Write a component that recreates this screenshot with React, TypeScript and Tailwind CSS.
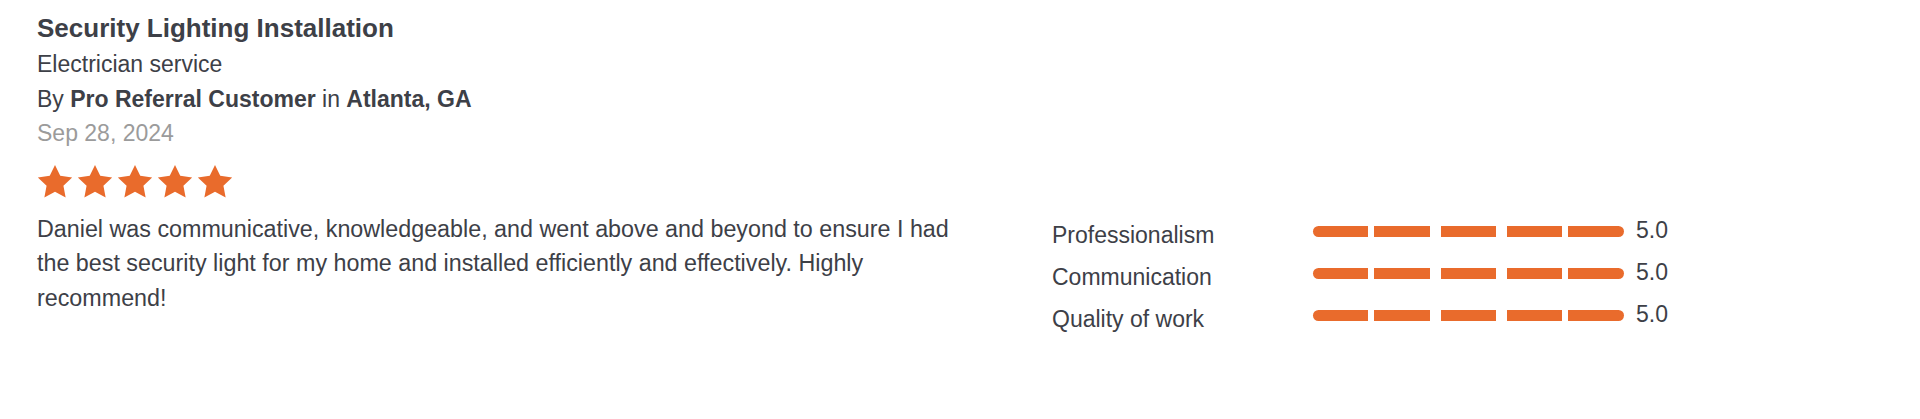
import type { ReactNode } from "react";

const ratings = [
  { label: "Professionalism", value: 5 },
  { label: "Communication", value: 5 },
  { label: "Quality of work", value: 5 },
];

function Star() {
  return (
    <svg viewBox="0 0 24 23" className="h-[34px] w-[36px]" aria-hidden="true">
      <path
        d="M12 0.6l3.55 7.4 8.05 1.05-5.9 5.6 1.5 8-7.2-3.95-7.2 3.95 1.5-8L0.4 9.05 8.45 8z"
        fill="#e96b2c"
      />
    </svg>
  );
}

function SegmentBar({ value }: { value: number }) {
  // five segments, rounded only at the outer ends
  const filled = (i: number) => (i < value ? "bg-[#e96b2c]" : "bg-[#e5e5e5]");
  return (
    <div className="flex h-[11px] w-[311px] items-stretch">
      <div className={`w-[55px] rounded-l-full ${filled(0)}`} />
      <div className={`ml-[6px] w-[56px] ${filled(1)}`} />
      <div className={`ml-[11px] w-[56px] ${filled(2)}`} />
      <div className={`ml-[11px] w-[55px] ${filled(3)}`} />
      <div className={`ml-[6px] w-[56px] rounded-r-full ${filled(4)}`} />
    </div>
  );
}

function B({ children }: { children: ReactNode }) {
  return <span className="font-bold">{children}</span>;
}

export default function App() {
  return (
    <div className="h-[419px] w-full bg-white pl-[37px] pt-[9px] font-['Liberation_Sans',Arial,sans-serif] text-[23px] leading-[34.5px] text-[#3d4047]">
      <h2 className="text-[26px] font-bold leading-[38px]">Security Lighting Installation</h2>
      <div>Electrician service</div>
      <div>
        By <B>Pro Referral Customer</B> in <B>Atlanta, GA</B>
      </div>
      <div className="text-[#9b9b9b]">Sep 28, 2024</div>
      <div className="mt-[13px] flex gap-[4px]">
        {Array.from({ length: 5 }).map((_, i) => (
          <Star key={i} />
        ))}
      </div>

      <div className="mt-[14px] flex">
        <p className="w-[930px] text-[23.3px] leading-[34.8px]">
          Daniel was communicative, knowledgeable, and went above and beyond to ensure I had the best
          security light for my home and installed efficiently and effectively. Highly recommend!
        </p>
        <div className="ml-[85px] mt-[6px] flex flex-col gap-[7.5px]">
          {ratings.map((r) => (
            <div key={r.label} className="flex items-center">
              <span className="w-[261px]">{r.label}</span>
              <div className="-mt-[6px]">
                <SegmentBar value={r.value} />
              </div>
              <span className="ml-[12px] -mt-[10px]">{r.value.toFixed(1)}</span>
            </div>
          ))}
        </div>
      </div>
    </div>
  );
}
